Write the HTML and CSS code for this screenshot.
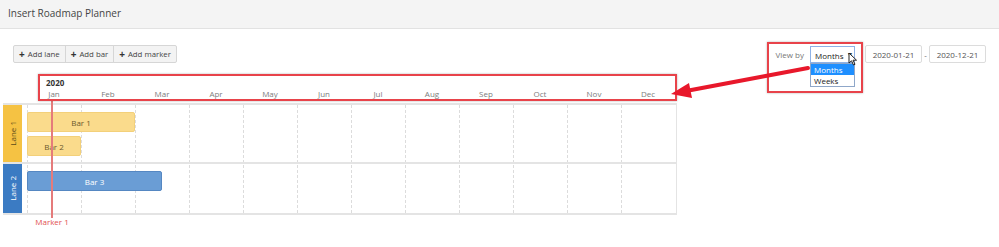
FILE: index.html
```html
<!DOCTYPE html>
<html>
<head>
    <meta charset="UTF-8">
    <link rel="stylesheet" href="styles.css">
</head>
<body>
    <div class="topbar">Insert Roadmap Planner</div>

    <div class="toolbar">
        <div class="btn-group">
            <button class="btn"><span class="plus">+</span>Add lane</button>
            <button class="btn"><span class="plus">+</span>Add bar</button>
            <button class="btn"><span class="plus">+</span>Add marker</button>
        </div>
        <div class="controls">
            <div class="view-by">
                <span class="view-label">View by</span>
                <div class="select-wrap">
                    <div class="select">Months<span class="caret">▾</span></div>
                    <div class="options">
                        <div class="option active">Months</div>
                        <div class="option">Weeks</div>
                    </div>
                    <svg class="cursor" width="10" height="14" viewBox="0 0 10 14">
                        <path d="M1 1 L1 11 L3.5 8.8 L5.5 13 L7 12.3 L5 8.2 L8.5 8.2 Z" fill="#fff" stroke="#222" stroke-width="1"/>
                    </svg>
                </div>
            </div>
            <div class="date-input first">2020-01-21</div>
            <span class="dash">-</span>
            <div class="date-input">2020-12-21</div>
        </div>
    </div>

    <div class="planner">
        <div class="timeline-head">
            <div class="year">2020</div>
            <div class="months">
                <span>Jan</span><span>Feb</span><span>Mar</span><span>Apr</span>
                <span>May</span><span>Jun</span><span>Jul</span><span>Aug</span>
                <span>Sep</span><span>Oct</span><span>Nov</span><span>Dec</span>
            </div>
        </div>

        <div class="lanes">
            <div class="grid-lines">
                <i></i><i></i><i></i><i></i><i></i><i></i><i></i><i></i><i></i><i></i><i></i><i></i>
            </div>
            <div class="lane lane-1">
                <div class="lane-label yellow"><span>Lane 1</span></div>
                <div class="lane-body">
                    <div class="bar bar-yellow" style="width: 108px">Bar 1</div>
                    <div class="bar bar-yellow" style="width: 54px">Bar 2</div>
                </div>
            </div>
            <div class="lane lane-2">
                <div class="lane-label blue"><span>Lane 2</span></div>
                <div class="lane-body">
                    <div class="bar bar-blue" style="width: 135px">Bar 3</div>
                </div>
            </div>
        </div>

        <div class="marker" style="left: 48px">
            <div class="marker-line"></div>
            <div class="marker-label">Marker 1</div>
        </div>
    </div>

    <!-- annotations -->
    <div class="note-box note-timeline"></div>
    <div class="note-box note-viewby"></div>
    <svg class="note-arrow" width="999" height="247">
        <line x1="808" y1="68" x2="686" y2="91" stroke="#e8182b" stroke-width="4" stroke-linecap="round"/>
        <polygon points="671,94 689,83 692,98" fill="#e8182b"/>
    </svg>
</body>
</html>
```

FILE: styles.css
```css
body {
    margin: 0;
    font-family: "Open Sans", "Noto Sans", sans-serif;
    color: #333;
    background: #fff;
    position: relative;
    width: 999px;
    height: 247px;
    overflow: hidden;
}
.topbar {
    height: 28px;
    line-height: 27px;
    padding-left: 8px;
    font-size: 10px;
    color: #444;
    background: #f4f4f4;
    border-bottom: 1px solid #e2e2e2;
}
.toolbar {
    display: flex;
    justify-content: space-between;
    align-items: flex-start;
    padding: 16px 13px 0 13px;
    height: 29px;
}
.btn-group {
    display: flex;
}
.btn {
    height: 18px;
    padding: 0 5px;
    font-family: inherit;
    font-size: 7.8px;
    color: #444;
    background: #f3f3f3;
    border: 1px solid #d6d6d6;
    margin-left: -1px;
    display: flex;
    align-items: center;
}
.btn:first-child {
    border-radius: 2px 0 0 2px;
    margin-left: 0;
}
.btn:last-child {
    border-radius: 0 2px 2px 0;
}
.plus {
    font-weight: bold;
    font-size: 10px;
    margin-right: 3px;
    color: #333;
}
.controls {
    display: flex;
    align-items: center;
    font-size: 8px;
}
.view-by {
    display: flex;
    align-items: center;
}
.view-label {
    color: #777;
    margin-right: 6px;
}
.select-wrap {
    position: relative;
    width: 45px;
}
.select {
    height: 17px;
    line-height: 18px;
    padding-left: 4px;
    border: 1px solid #8fb2e6;
    background: #fff;
    color: #222;
    box-sizing: border-box;
    font-size: 8px;
}
.caret {
    position: absolute;
    right: 3px;
    top: -1px;
    font-size: 8px;
    color: #333;
}
.options {
    position: absolute;
    top: 17px;
    left: 0;
    width: 45px;
    border: 1px solid #8fa7c9;
    background: #fff;
    box-sizing: border-box;
    font-size: 8px;
}
.option {
    height: 11px;
    line-height: 11px;
    padding-left: 3px;
    color: #222;
}
.option.active {
    background: #1e8fff;
    color: #fff;
}
.cursor {
    position: absolute;
    left: 38px;
    top: 6px;
}
.date-input {
    width: 57px;
    height: 18px;
    line-height: 18px;
    box-sizing: border-box;
    border: 1px solid #dcdcdc;
    border-radius: 2px;
    text-align: center;
    color: #555;
}
.date-input.first {
    margin-left: 10px;
}
.dash {
    width: 7px;
    text-align: center;
    color: #666;
}
.planner {
    position: relative;
    margin-left: 3px;
    width: 674px;
}
.timeline-head {
    height: 29px;
    padding-left: 24px;
    font-size: 8px;
}
.year {
    font-weight: bold;
    color: #333;
    padding: 3px 0 0 19px;
    height: 11px;
}
.months {
    display: flex;
}
.months span {
    width: 54px;
    text-align: center;
    color: #7d7d7d;
}
.lanes {
    position: relative;
    border-top: 2px solid #e4e4e4;
    border-bottom: 2px solid #e4e4e4;
    border-right: 1px solid #e4e4e4;
}
.grid-lines {
    position: absolute;
    top: 0;
    bottom: 0;
    left: 24px;
    display: flex;
}
.grid-lines i {
    width: 54px;
    border-left: 1px dashed #dcdcdc;
    box-sizing: border-box;
}
.lane {
    display: flex;
    position: relative;
}
.lane-2 {
    border-top: 2px solid #e4e4e4;
}
.lane-label {
    width: 19px;
    display: flex;
    align-items: center;
    justify-content: center;
    font-size: 8px;
}
.lane-label span {
    writing-mode: vertical-rl;
    transform: rotate(180deg);
}
.lane-label.yellow {
    background: #f5c243;
    color: #5a4a1a;
}
.lane-label.blue {
    background: #3b7bc3;
    color: #fff;
}
.lane-body {
    display: flex;
    flex-direction: column;
    gap: 4px;
    padding: 7px 0 0 5px;
    flex: 1;
    position: relative;
    box-sizing: border-box;
}
.lane-1 .lane-body {
    height: 57px;
}
.lane-2 .lane-body {
    height: 49px;
}
.bar {
    height: 20px;
    line-height: 19px;
    box-sizing: border-box;
    border-radius: 2px;
    font-size: 8px;
    text-align: center;
}
.bar-yellow {
    background: #fadb8c;
    border: 1px solid #f3d07a;
    color: #6b5a2d;
}
.bar-blue {
    background: #6a9dd5;
    border: 1px solid #5587c2;
    color: #fff;
}
.marker {
    position: absolute;
    top: 26px;
    width: 0;
}
.marker-line {
    width: 2px;
    height: 118px;
    background: #e57b7b;
}
.marker-label {
    position: absolute;
    top: 116px;
    left: -16px;
    width: 34px;
    text-align: center;
    font-size: 8px;
    color: #e25050;
    white-space: nowrap;
}
.note-box {
    position: absolute;
    border: 2px solid #e8434a;
    box-shadow: 0 0 2px rgba(0, 0, 0, 0.3);
}
.note-timeline {
    left: 38px;
    top: 74px;
    width: 635px;
    height: 23px;
}
.note-viewby {
    left: 767px;
    top: 42px;
    width: 92px;
    height: 47px;
}
.note-arrow {
    position: absolute;
    left: 0;
    top: 0;
}
```
